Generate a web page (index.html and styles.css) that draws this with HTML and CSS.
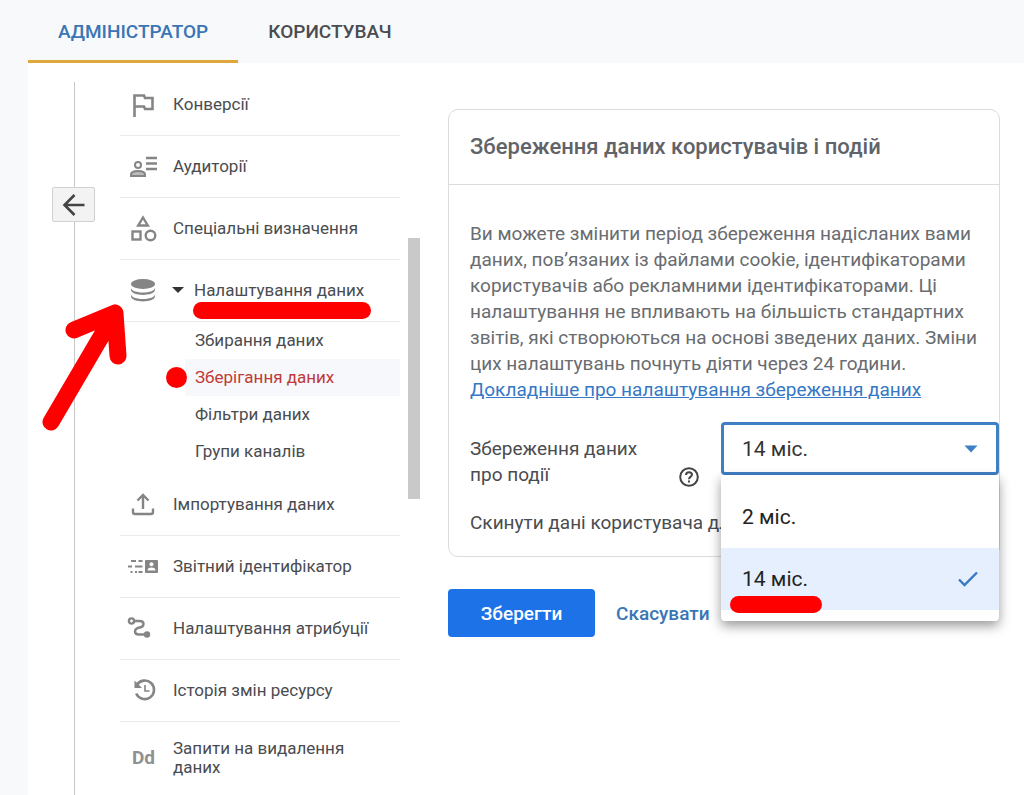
FILE: index.html
```html
<!DOCTYPE html>
<html lang="uk">
<head>
    <meta charset="UTF-8">
    <meta name="viewport" content="width=device-width, initial-scale=1.0">
    <title>Збереження даних</title>
    <link rel="stylesheet" href="styles.css">
</head>
<body>
    <header class="tabs">
        <a href="#" class="tabs__item tabs__item--active">АДМІНІСТРАТОР</a>
        <a href="#" class="tabs__item">КОРИСТУВАЧ</a>
    </header>

    <div class="main">
        <div class="rail">
            <button class="rail__back" aria-label="Назад">
                <svg width="24" height="24" viewBox="0 0 24 24" fill="none" stroke="#444" stroke-width="2.6"><path d="M22.500 12H3M12.500 2L2.500 12L12.500 22"/></svg>
            </button>
        </div>

        <nav class="nav">
            <a href="#" class="nav__item">
                <svg class="nav__icon" viewBox="0 0 32 32" fill="none" stroke="#858585" stroke-width="2.6"><path d="M7.500 29V7.500H17L18 10H25.500V21H18L17 18.500H7.500"/></svg>
                <span>Конверсії</span>
            </a>
            <a href="#" class="nav__item">
                <svg class="nav__icon" viewBox="0 0 32 32" fill="none" stroke="#858585" stroke-width="2"><circle cx="11" cy="15" r="3"/><path d="M4 26V24.500C4 21.500 8 21 11 21S18 21.500 18 24.500V26Z" fill="#bbb"/><path d="M19 8H30M19 13.500H30M19 19H30" stroke-width="2.400"/></svg>
                <span>Аудиторії</span>
            </a>
            <a href="#" class="nav__item">
                <svg class="nav__icon" viewBox="0 0 32 32" fill="none" stroke="#858585" stroke-width="2.400"><path d="M16 5.500L20.800 13.500H11.200Z"/><rect x="5.500" y="19.500" width="8" height="8"/><circle cx="23.500" cy="23.500" r="4.800"/></svg>
                <span>Спеціальні визначення</span>
            </a>
            <a href="#" class="nav__item nav__item--open">
                <svg class="nav__icon" viewBox="0 0 32 32" fill="#858585"><ellipse cx="16" cy="10" rx="12" ry="5"/><path d="M4 14C5 20 27 20 28 14V16C27 22.500 5 22.500 4 16ZM4 20.500C5 26.500 27 26.500 28 20.500V22.500C27 29 5 29 4 22.500Z"/></svg>
                <svg class="nav__caret" width="14" height="8" viewBox="0 0 14 8" fill="#333"><path d="M1 1H13L7 7Z"/></svg>
                <span class="nav__marked">Налаштування даних</span>
            </a>
            <div class="nav__sub">
                <a href="#">Збирання даних</a>
                <a href="#" class="nav__current">Зберігання даних</a>
                <a href="#">Фільтри даних</a>
                <a href="#">Групи каналів</a>
            </div>
            <a href="#" class="nav__item">
                <svg class="nav__icon" viewBox="0 0 32 32" fill="none" stroke="#858585" stroke-width="2.400"><path d="M16 21V7M10.500 12.500L16 7L21.500 12.500M6 20.500V24Q6 26 8 26H24Q26 26 26 24V20.500"/></svg>
                <span>Імпортування даних</span>
            </a>
            <a href="#" class="nav__item">
                <svg class="nav__icon" viewBox="0 0 32 32" fill="none" stroke="#858585" stroke-width="2.200"><path d="M4 11H9M11.500 11H15.500M1 16.500H5M8 16.500H15.500M3.500 22H5.500M8 22H10M11.500 22H15.500"/><rect x="18" y="10" width="13" height="13" rx="1" fill="#858585" stroke="none"/><circle cx="24.500" cy="14.200" r="2" fill="#fff" stroke="none"/><path d="M20.500 20.500Q20.500 17.500 24.500 17.500T28.500 20.500Z" fill="#fff" stroke="none"/></svg>
                <span>Звітний ідентифікатор</span>
            </a>
            <a href="#" class="nav__item">
                <svg class="nav__icon" viewBox="0 0 32 32" fill="none" stroke="#858585" stroke-width="2.400"><circle cx="4.500" cy="9" r="2.600"/><path d="M7 9H12.500Q16.500 9 16.500 12T12.500 15.500Q8 16.500 8 19.500T12 22.500H18"/><circle cx="20" cy="22.500" r="3.200" fill="#858585" stroke="none"/></svg>
                <span>Налаштування атрибуції</span>
            </a>
            <a href="#" class="nav__item">
                <svg class="nav__icon" viewBox="0 0 32 32" fill="none" stroke="#858585" stroke-width="2.600"><path d="M9.800 11A9.300 9.300 0 1 1 9.200 19.500"/><path d="M7.500 6.500V14H15Z" fill="#858585" stroke="none"/><path d="M18 11V17H22.500" stroke-width="1.600"/></svg>
                <span>Історія змін ресурсу</span>
            </a>
            <a href="#" class="nav__item nav__item--tall">
                <span class="nav__icon nav__icon--text">Dd</span>
                <span>Запити на видалення даних</span>
            </a>
        </nav>

        <div class="scroll"><div class="scroll__thumb"></div></div>

        <main class="content">
            <section class="card">
                <h1 class="card__title">Збереження даних користувачів і подій</h1>
                <div class="card__body">
                    <p class="card__text">Ви можете змінити період збереження надісланих вами даних, пов’язаних із файлами cookie, ідентифікаторами користувачів або рекламними ідентифікаторами. Ці налаштування не впливають на більшість стандартних звітів, які створюються на основі зведених даних. Зміни цих налаштувань почнуть діяти через 24 години. <a href="#">Докладніше про налаштування збереження даних</a></p>

                    <div class="field">
                        <label class="field__label" for="period">Збереження даних про події</label>
                        <button class="field__help" aria-label="Довідка">
                            <svg width="22" height="22" viewBox="0 0 22 22" fill="none" stroke="#444" stroke-width="2"><circle cx="11" cy="11" r="8.800"/><path d="M8 9Q8 6.200 11 6.200T14 8.800C14 10.500 11 10.800 11 13.200M11 14.600V16.600"/></svg>
                        </button>
                        <div class="picker">
                            <select class="picker__select" id="period">
                                <option>2 міс.</option>
                                <option selected>14 міс.</option>
                            </select>
                            <svg class="picker__arrow" width="14" height="8" viewBox="0 0 14 8" fill="#3f7fc4"><path d="M0.500 0.500H13.500L7 7.500Z"/></svg>
                            <ul class="picker__menu">
                                <li>2 міс.</li>
                                <li class="picker__chosen">
                                    <span>14 міс.</span>
                                    <svg width="20" height="16" viewBox="0 0 20 16" fill="none" stroke="#3578c5" stroke-width="2.400"><path d="M1 8.500L6.500 14L19 1.500"/></svg>
                                </li>
                            </ul>
                        </div>
                    </div>

                    <p class="card__reset">Скинути дані користувача для</p>
                </div>
            </section>

            <div class="actions">
                <button class="actions__save">Зберегти</button>
                <button class="actions__cancel">Скасувати</button>
            </div>
        </main>

        <svg class="pointer" width="90" height="134" viewBox="0 0 90 134" fill="none" stroke="#f00" stroke-width="17" stroke-linecap="round" stroke-linejoin="round"><path d="M11 122L75 13M34 30L75 13L78 56"/></svg>
    </div>
</body>
</html>
```
FILE: styles.css
```css
* {
    box-sizing: border-box;
}

body {
    margin: 0;
    height: 100vh;
    display: flex;
    flex-direction: column;
    overflow: hidden;
    background-color: #f7f9fb;
    color: #4a4c50;
    font-family: Roboto, Arial, sans-serif;
    font-size: 17px;
}

a {
    color: inherit;
    text-decoration: none;
}

button {
    font-family: inherit;
    cursor: pointer;
}

.tabs {
    display: flex;
    padding-left: 28px;
}

.tabs__item {
    height: 63px;
    padding: 0 30px;
    line-height: 63px;
    font-size: 19px;
    font-weight: 500;
}

.tabs__item--active {
    color: #3a75b5;
    border-bottom: 3px solid #e0a83c;
}

.main {
    position: relative;
    flex: 1;
    min-height: 0;
    margin-left: 28px;
    display: flex;
    background-color: #fff;
    overflow: hidden;
}

.rail {
    width: 92px;
    margin-top: 19px;
    padding: 105px 0 0 24px;
    background: linear-gradient(#c8c8c8, #c8c8c8) 46px 0 / 1px 100% no-repeat;
}

.rail__back {
    display: flex;
    align-items: center;
    justify-content: center;
    width: 43px;
    height: 35px;
    padding: 0;
    background-color: #f3f3f3;
    border: 1px solid #d0d0d0;
    border-radius: 2px;
}

.nav {
    width: 280px;
    padding-top: 11px;
}

.nav__item {
    display: flex;
    align-items: center;
    height: 62px;
    padding: 0 0 2px 7px;
    border-bottom: 1px solid #ebebeb;
}

.nav__item--tall {
    height: 74px;
    line-height: 19px;
    padding-right: 40px;
}

.nav__icon {
    flex: none;
    width: 32px;
    height: 32px;
    margin-right: 14px;
}

.nav__icon--text {
    padding-left: 5px;
    line-height: 32px;
    font-size: 19px;
    font-weight: 700;
    color: #909090;
}

.nav__caret {
    margin: 0 9px 0 -2px;
}

.nav__marked {
    position: relative;
}

/* red marker under the open group */
.nav__marked::after {
    content: "";
    position: absolute;
    left: -1px;
    right: -7px;
    top: 22px;
    height: 17px;
    border-radius: 9px;
    background-color: #f00;
}

.nav__sub {
    margin-bottom: 4px;
}

.nav__sub a {
    display: block;
    margin-left: 65px;
    padding-left: 10px;
    line-height: 37px;
}

.nav__sub .nav__current {
    position: relative;
    color: #c03a38;
    background-color: #f6f8fb;
}

.nav__current::before {
    content: "";
    position: absolute;
    left: -19px;
    top: 8px;
    width: 21px;
    height: 21px;
    border-radius: 50%;
    background-color: #f00;
}

.scroll {
    width: 20px;
    padding: 175px 0 0 8px;
}

.scroll__thumb {
    height: 261px;
    background-color: #c9c9c9;
}

.content {
    flex: 1;
    min-width: 0;
    padding: 46px 24px 0 28px;
}

.card {
    border: 1px solid #dcdcdc;
    border-radius: 10px;
}

.card__title {
    margin: 0;
    padding: 0 21px;
    line-height: 74px;
    font-size: 22px;
    font-weight: 500;
    color: #606367;
    border-bottom: 1px solid #dcdcdc;
}

.card__body {
    padding: 36px 0 20px 21px;
    font-size: 19px;
    line-height: 26px;
}

.card__text {
    margin: 0;
    padding-right: 10px;
    color: #696c70;
}

.card__text a {
    color: #3578c5;
    text-decoration: underline;
}

.field {
    display: flex;
    align-items: flex-start;
    margin-top: 19px;
}

.field__label {
    flex: 1;
    padding: 14px 30px 0 0;
}

.field__help {
    align-self: flex-end;
    display: flex;
    padding: 0;
    margin: 0 21px 0 0;
    border: none;
    background: none;
}

.picker {
    position: relative;
    width: 278px;
}

.picker__select {
    display: block;
    width: 100%;
    height: 53px;
    padding: 0 18px;
    appearance: none;
    font-family: inherit;
    font-size: 21px;
    color: #333;
    background-color: #fff;
    border: 3px solid #3f7fc4;
    border-radius: 4px;
}

.picker__arrow {
    position: absolute;
    right: 21px;
    top: 23px;
    pointer-events: none;
}

.picker__menu {
    position: absolute;
    z-index: 1;
    top: 100%;
    left: 0;
    right: 0;
    margin: 0;
    padding: 11px 0;
    list-style: none;
    font-size: 21px;
    color: #222;
    background-color: #fff;
    border-radius: 0 0 4px 4px;
    box-shadow: 0 5px 12px rgba(0, 0, 0, 0.4);
}

.picker__menu li {
    position: relative;
    display: flex;
    align-items: center;
    justify-content: space-between;
    height: 62px;
    padding: 0 21px;
}

.picker__menu .picker__chosen {
    background-color: #e5effd;
}

.picker__chosen::after {
    content: "";
    position: absolute;
    left: 9px;
    bottom: -3px;
    width: 92px;
    height: 17px;
    border-radius: 9px;
    background-color: #f00;
}

/* the text is cut off where the menu begins */
.card__reset {
    margin: 22px 278px 0 0;
    overflow: hidden;
    white-space: nowrap;
}

.actions {
    display: flex;
    margin-top: 32px;
}

.actions__save,
.actions__cancel {
    height: 48px;
    border: none;
    border-radius: 4px;
    font-size: 19px;
    font-weight: 500;
}

.actions__save {
    width: 147px;
    color: #fff;
    background-color: #1d72e8;
}

.actions__cancel {
    padding: 0 21px;
    color: #3a75b5;
    background: none;
}

/* arrow drawn over the rail and the menu */
.pointer {
    position: absolute;
    left: 12px;
    top: 237px;
    pointer-events: none;
}
```
